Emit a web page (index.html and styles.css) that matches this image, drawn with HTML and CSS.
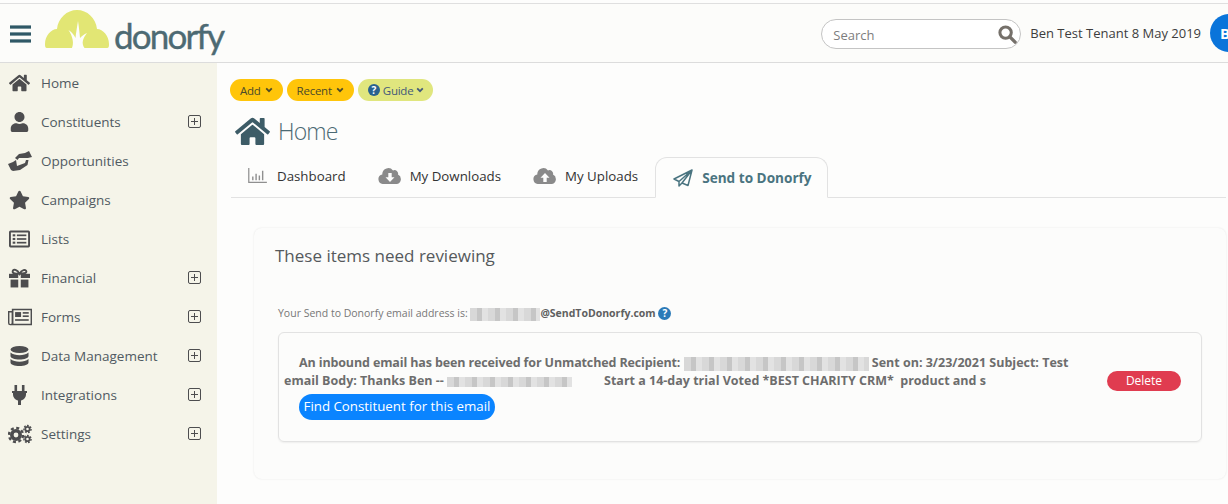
FILE: index.html
```html
<!DOCTYPE html>
<html lang="en">
<head>
    <meta charset="UTF-8">
    <title>Donorfy - Home</title>
    <link rel="stylesheet" href="styles.css">
</head>
<body>
    <header class="topbar">
        <svg class="burger" viewBox="0 0 22 18"><rect y="0" width="22" height="3.4"/><rect y="7.3" width="22" height="3.4"/><rect y="14.6" width="22" height="3.4"/></svg>
        <div class="logo">
            <svg class="logo-cloud" viewBox="0 0 64 38">
                <path fill="#e2e674" d="M2 38C0 38 0 36 0 34 0 26 6 19 12 19 13 8 22 0 32 0S51 8 52 19C58 19 64 26 64 34 64 36 64 38 62 38z"/>
                <path fill="#fdfdfb" d="M27 38C29 33 28 27 23.500 20 27 22 29 25 30.500 28 31 23 32 17 33 11 34 17 34.500 23 35 28 37 26 39 24 42 23 38 28 36 33 39.500 38z"/>
            </svg>
            <span class="logo-text">donorfy</span>
        </div>
        <div class="search">
            <span class="search-label">Search</span>
            <svg class="search-icon" viewBox="0 0 20 20"><circle cx="8" cy="8" r="6" fill="none" stroke="#75706a" stroke-width="3.200"/><path d="M12.500 12.500L18 18" stroke="#75706a" stroke-width="3.600" stroke-linecap="round"/></svg>
        </div>
        <span class="tenant">Ben Test Tenant 8 May 2019</span>
        <div class="avatar">BT</div>
    </header>

    <div class="layout">
        <nav class="sidebar">
            <a class="nav-item">
                <svg class="nav-icon" viewBox="0 0 576 512"><path d="M280.37 148.26L96 300.11V464a16 16 0 0 0 16 16l112.06-.29a16 16 0 0 0 15.92-16V368a16 16 0 0 1 16-16h64a16 16 0 0 1 16 16v95.64a16 16 0 0 0 16 16.05L464 480a16 16 0 0 0 16-16V300L295.67 148.26a12.19 12.19 0 0 0-15.3 0zM571.6 251.47L488 182.56V44.05a12 12 0 0 0-12-12h-56a12 12 0 0 0-12 12v72.61L318.47 43a48 48 0 0 0-61 0L4.34 251.47a12 12 0 0 0-1.6 16.9l25.5 31A12 12 0 0 0 45.15 301l235.22-193.74a12.19 12.19 0 0 1 15.3 0L530.9 301a12 12 0 0 0 16.9-1.6l25.5-31a12 12 0 0 0-1.7-16.93z"/></svg>
                <span class="nav-label">Home</span>
            </a>
            <a class="nav-item">
                <svg class="nav-icon" viewBox="0 0 448 512"><path d="M224 256c70.7 0 128-57.3 128-128S294.700 0 224 0 96 57.300 96 128s57.300 128 128 128zm89.600 32h-16.700c-22.200 10.200-46.900 16-72.900 16s-50.600-5.800-72.900-16h-16.700C60.200 288 0 348.200 0 422.400V464c0 26.500 21.500 48 48 48h352c26.500 0 48-21.500 48-48v-41.600c0-74.200-60.200-134.400-134.400-134.400z"/></svg>
                <span class="nav-label">Constituents</span>
                <span class="plus"></span>
            </a>
            <a class="nav-item">
                <svg class="nav-icon wide" viewBox="0 0 24 20"><path d="M0 13L5 11 8 9 9 15 17 12 18 9 20.500 9 19.500 14 12 19 5 20 3 19z"/><path d="M7 7L11 3 17 2 21 0 24 6 20 7H11L9.500 9z"/></svg>
                <span class="nav-label">Opportunities</span>
            </a>
            <a class="nav-item">
                <svg class="nav-icon" viewBox="0 0 576 512"><path d="M259.300 17.800L194 150.200 47.900 171.500c-26.200 3.800-36.700 36.100-17.700 54.600l105.700 103-25 145.500c-4.500 26.300 23.200 46 46.400 33.700L288 439.600l130.700 68.700c23.200 12.200 50.900-7.400 46.400-33.700l-25-145.500 105.700-103c19-18.500 8.500-50.800-17.700-54.600L382 150.200 316.700 17.800c-11.700-23.600-45.600-23.900-57.400 0z"/></svg>
                <span class="nav-label">Campaigns</span>
            </a>
            <a class="nav-item">
                <svg class="nav-icon" viewBox="0 0 20 16"><path fill-rule="evenodd" d="M1.500 0h17A1.500 1.500 0 0 1 20 1.500v13a1.500 1.500 0 0 1-1.500 1.500h-17A1.500 1.500 0 0 1 0 14.500v-13A1.500 1.500 0 0 1 1.500 0zm.3 1.800v12.400h16.400V1.800z"/><rect x="3.500" y="3.500" width="2.500" height="2"/><rect x="3.500" y="7" width="2.500" height="2"/><rect x="3.500" y="10.500" width="2.500" height="2"/><rect x="7.500" y="3.700" width="9" height="1.600"/><rect x="7.500" y="7.200" width="9" height="1.600"/><rect x="7.500" y="10.700" width="9" height="1.600"/></svg>
                <span class="nav-label">Lists</span>
            </a>
            <a class="nav-item">
                <svg class="nav-icon" viewBox="0 0 20 18"><rect x="0" y="5" width="8.800" height="4"/><rect x="11.200" y="5" width="8.800" height="4"/><rect x="1.500" y="10.500" width="7.300" height="7.500"/><rect x="11.200" y="10.500" width="7.300" height="7.500"/><path fill="none" stroke="#4d4d4f" stroke-width="1.800" d="M10 5C8 1 4 0 3.500 2.500S7 5 10 5c3 0 7-.5 6.500-2.500S12 1 10 5z"/></svg>
                <span class="nav-label">Financial</span>
                <span class="plus"></span>
            </a>
            <a class="nav-item">
                <svg class="nav-icon wide" viewBox="0 0 22 15"><path fill-rule="evenodd" d="M3.500 0H22v15H2a2 2 0 0 1-2-2V2h3.500zm1.500 1.300V13.700h15.700V1.300zM1.300 3.300v9.700a.8.8 0 0 0 2 0V3.300z"/><rect x="6.500" y="3" width="5.500" height="4.500"/><rect x="13.500" y="3" width="5.500" height="1.500"/><rect x="13.500" y="6" width="5.500" height="1.500"/><rect x="6.500" y="9.500" width="12.500" height="1.500"/></svg>
                <span class="nav-label">Forms</span>
                <span class="plus"></span>
            </a>
            <a class="nav-item">
                <svg class="nav-icon" viewBox="0 0 18 20"><ellipse cx="9" cy="3.500" rx="9" ry="3.500"/><path d="M0 6.500C2 8.500 5.500 9.200 9 9.200s7-.7 9-2.700V10c0 2-4 3.500-9 3.500S0 12 0 10z"/><path d="M0 13C2 15 5.500 15.700 9 15.700s7-.7 9-2.700v3.500c0 2-4 3.500-9 3.500s-9-1.500-9-3.500z"/></svg>
                <span class="nav-label">Data Management</span>
                <span class="plus"></span>
            </a>
            <a class="nav-item">
                <svg class="nav-icon" viewBox="0 0 16 20"><rect x="3" y="0" width="2.600" height="6"/><rect x="10.400" y="0" width="2.600" height="6"/><path d="M.500 6h15v2h-1v1.500c0 3-2.500 5.500-5 6V20h-3v-4.500c-2.500-.5-5-3-5-6V8h-1z"/></svg>
                <span class="nav-label">Integrations</span>
                <span class="plus"></span>
            </a>
            <a class="nav-item">
                <svg class="nav-icon wide" viewBox="0 0 24 18">
                    <circle cx="8" cy="10" r="4.200" fill="none" stroke="#4d4d4f" stroke-width="3.600"/>
                    <circle cx="8" cy="10" r="7" fill="none" stroke="#4d4d4f" stroke-width="2.500" stroke-dasharray="3 2.500"/>
                    <circle cx="19.500" cy="4" r="2.200" fill="none" stroke="#4d4d4f" stroke-width="1.800"/>
                    <circle cx="19.500" cy="4" r="3.600" fill="none" stroke="#4d4d4f" stroke-width="1.400" stroke-dasharray="1.800 1.400"/>
                    <circle cx="19.500" cy="14" r="2.200" fill="none" stroke="#4d4d4f" stroke-width="1.800"/>
                    <circle cx="19.500" cy="14" r="3.600" fill="none" stroke="#4d4d4f" stroke-width="1.400" stroke-dasharray="1.800 1.400"/>
                </svg>
                <span class="nav-label">Settings</span>
                <span class="plus"></span>
            </a>
        </nav>

        <main class="content">
            <div class="quick-actions">
                <span class="pill pill-yellow">Add <svg class="chevron" viewBox="0 0 10 7"><path d="M1.500 1.500L5 5l3.500-3.500"/></svg></span>
                <span class="pill pill-yellow">Recent <svg class="chevron" viewBox="0 0 10 7"><path d="M1.500 1.500L5 5l3.500-3.500"/></svg></span>
                <span class="pill pill-green"><span class="help-dot small">?</span> Guide <svg class="chevron" viewBox="0 0 10 7"><path d="M1.500 1.500L5 5l3.500-3.500"/></svg></span>
            </div>

            <div class="page-title">
                <svg class="title-icon" viewBox="0 0 576 512"><path d="M280.37 148.26L96 300.11V464a16 16 0 0 0 16 16l112.06-.29a16 16 0 0 0 15.92-16V368a16 16 0 0 1 16-16h64a16 16 0 0 1 16 16v95.64a16 16 0 0 0 16 16.05L464 480a16 16 0 0 0 16-16V300L295.67 148.26a12.19 12.19 0 0 0-15.3 0zM571.6 251.47L488 182.56V44.05a12 12 0 0 0-12-12h-56a12 12 0 0 0-12 12v72.61L318.47 43a48 48 0 0 0-61 0L4.34 251.47a12 12 0 0 0-1.6 16.9l25.5 31A12 12 0 0 0 45.15 301l235.22-193.74a12.19 12.19 0 0 1 15.3 0L530.9 301a12 12 0 0 0 16.9-1.6l25.5-31a12 12 0 0 0-1.7-16.93z"/></svg>
                <h1>Home</h1>
            </div>

            <div class="tabs">
                <a class="tab tab-dash">
                    <svg class="tab-icon chart" viewBox="0 0 20 16"><path d="M.700 0v15.300H20" fill="none" stroke="#8f8f8f" stroke-width="1.300"/><path d="M5 13V9M8.500 13V6M12 13V8M15.500 13V3" fill="none" stroke="#8f8f8f" stroke-width="1.500"/></svg>
                    Dashboard
                </a>
                <a class="tab">
                    <svg class="tab-icon cloud" viewBox="0 0 24 17"><path fill="#8a8a8a" d="M20 7.600A3.600 3.600 0 0 0 15 3.400 6 6 0 0 0 4.300 6.800v.7A4.800 4.800 0 0 0 5.500 17H19a5 5 0 0 0 1-9.400z"/><path fill="#fdfdfc" d="M10.300 6h3.400v4.300h2.800L12 15l-4.500-4.700h2.800z"/></svg>
                    My Downloads
                </a>
                <a class="tab">
                    <svg class="tab-icon cloud" viewBox="0 0 24 17"><path fill="#8a8a8a" d="M20 7.600A3.600 3.600 0 0 0 15 3.400 6 6 0 0 0 4.300 6.800v.7A4.800 4.800 0 0 0 5.500 17H19a5 5 0 0 0 1-9.400z"/><path fill="#fdfdfc" d="M10.300 15h3.400v-4.300h2.800L12 6l-4.500 4.700h2.800z"/></svg>
                    My Uploads
                </a>
                <a class="tab tab-active">
                    <svg class="tab-icon plane" viewBox="0 0 20 18"><path d="M19 1L1 10l5 2.500L19 1 9 14l6 2.500zM6 12.500V17l3-3" fill="none" stroke="#4a7480" stroke-width="1.500" stroke-linejoin="round"/></svg>
                    Send to Donorfy
                </a>
            </div>

            <section class="card">
                <h2>These items need reviewing</h2>
                <p class="address">Your Send to Donorfy email address is: <span class="redact redact-address"></span><strong>@SendToDonorfy.com</strong> <span class="help-dot">?</span></p>
                <div class="inbox-row">
                    <div class="inbox-body">
                        <p class="inbox-text"><span class="lead">An inbound email has been received for Unmatched Recipient:</span> <span class="redact redact-recipient"></span> Sent on: 3/23/2021 Subject: Test<br>
                        <span class="unindent">email Body: Thanks Ben -- <span class="redact redact-sender"></span><span class="spaced">Start a 14-day trial Voted *BEST CHARITY CRM*&nbsp; product and s</span></span></p>
                        <a class="btn-find">Find Constituent for this email</a>
                    </div>
                    <a class="btn-delete">Delete</a>
                </div>
            </section>
        </main>
    </div>
</body>
</html>
```

FILE: styles.css
```css
* {
    box-sizing: border-box;
}
html, body {
    height: 100%;
}
body {
    margin: 0;
    overflow: hidden;
    background: #fdfdfc;
    font-family: 'Open Sans', 'Liberation Sans', sans-serif;
    color: #333;
}
h1, h2, p {
    margin: 0;
    font-weight: normal;
}

/* top bar */
.topbar {
    display: flex;
    align-items: center;
    height: 60px;
    margin-top: 3px;
    padding-left: 10px;
    background: #fcfcfa;
    border-top: 1px solid #dfdfdf;
    border-bottom: 1px solid #dcdcdc;
    overflow: hidden;
}
.burger {
    width: 21px;
    height: 18px;
    margin-top: 1px;
    fill: #2f5866;
}
.logo {
    display: flex;
    align-items: flex-end;
    margin-left: 14px;
    margin-top: -9px;
}
.logo-cloud {
    width: 64px;
    height: 38px;
}
.logo-text {
    margin-left: 5px;
    margin-bottom: -8px;
    font-family: 'Lato', sans-serif;
    font-size: 35px;
    line-height: 42px;
    letter-spacing: -1.800px;
    color: #4d6a73;
    -webkit-text-stroke: .4px #4d6a73;
}
.search {
    display: flex;
    align-items: center;
    justify-content: space-between;
    width: 200px;
    height: 30px;
    margin-left: auto;
    margin-top: 2px;
    padding: 0 3px 0 11px;
    background: #fff;
    border: 1px solid #c4c4c4;
    border-radius: 15px;
}
.search-label {
    padding-top: 2px;
    font-size: 13px;
    color: #7d7d7d;
}
.search-icon {
    width: 19px;
    height: 19px;
}
.tenant {
    margin-left: 9px;
    font-size: 13px;
    white-space: nowrap;
    color: #3d3d3d;
}
.avatar {
    flex: none;
    width: 38px;
    height: 38px;
    margin-left: 9px;
    margin-right: -20px;
    margin-top: -1px;
    padding-left: 10px;
    line-height: 38px;
    font-size: 15px;
    font-weight: 700;
    color: #fff;
    background: #0a74da;
    border-radius: 50%;
}

.layout {
    display: flex;
    height: 441px;
}

/* sidebar */
.sidebar {
    flex: none;
    width: 217px;
    background: #f5f4e9;
}
.nav-item {
    display: flex;
    align-items: center;
    height: 39px;
    padding: 0 16px 0 0;
}
.nav-icon {
    flex: none;
    width: 21px;
    height: 20px;
    margin-left: 9px;
    margin-right: 11px;
    fill: #4d4d4f;
}
.nav-icon.wide {
    width: 24px;
    margin-left: 8px;
    margin-right: 9px;
}
.nav-label {
    flex: 1;
    font-size: 13.500px;
    color: #505a62;
}
.plus {
    position: relative;
    flex: none;
    width: 13px;
    height: 13px;
    border: 1px solid #4d4d4f;
    border-radius: 2px;
}
.plus::before, .plus::after {
    content: "";
    position: absolute;
    background: #4d4d4f;
}
.plus::before {
    left: 2px;
    right: 2px;
    top: 5px;
    height: 1px;
}
.plus::after {
    top: 2px;
    bottom: 2px;
    left: 5px;
    width: 1px;
}

/* main column */
.content {
    flex: 1;
    min-width: 0;
    padding: 16px 2px 0 13px;
}
.quick-actions {
    display: flex;
    gap: 4px;
}
.pill {
    display: flex;
    align-items: center;
    gap: 4px;
    height: 22px;
    padding: 0 10px;
    font-size: 11.500px;
    letter-spacing: -.25px;
    border-radius: 11px;
    color: #4a4a2a;
}
.pill-yellow {
    background: #ffc50a;
}
.pill-green {
    gap: 3px;
    padding: 0 9px 0 10px;
    background: #e0e67e;
    color: #43597a;
}
.chevron {
    width: 8px;
    height: 6px;
    fill: none;
    stroke: currentColor;
    stroke-width: 2.200;
}
.help-dot {
    display: inline-block;
    width: 13px;
    height: 13px;
    line-height: 13px;
    font-size: 10px;
    font-weight: 700;
    text-align: center;
    letter-spacing: 0;
    color: #fff;
    background: #2b7ab8;
    border-radius: 50%;
}
.help-dot.small {
    width: 12px;
    height: 12px;
    line-height: 12px;
    background: #29628f;
}
.page-title {
    display: flex;
    align-items: center;
    gap: 8px;
    height: 32px;
    margin-top: 14px;
    padding-left: 5px;
}
.title-icon {
    width: 35px;
    height: 31px;
    fill: #3d5c67;
}
h1 {
    font-size: 23px;
    font-weight: 300;
    letter-spacing: -.9px;
    color: #4c6a74;
}

/* tabs */
.tabs {
    display: flex;
    align-items: stretch;
    height: 41px;
    margin: 10px 0 0 1px;
    border-bottom: 1px solid #e2e2e2;
}
.tab {
    display: flex;
    align-items: center;
    gap: 8px;
    padding: 0 16px 3px;
    font-size: 13.300px;
    white-space: nowrap;
    color: #333;
}
.tab-dash {
    gap: 10px;
    padding: 0 16px 3px 17px;
}
.tab-icon.chart {
    width: 19px;
    height: 15px;
}
.tab-icon.cloud {
    width: 24px;
    height: 17px;
}
.tab-icon.plane {
    width: 20px;
    height: 18px;
}
.tab-active {
    gap: 9px;
    height: 41px;
    margin-left: 1px;
    padding: 0 15px 0 17px;
    font-size: 13.600px;
    font-weight: 700;
    color: #4a7480;
    background: #fdfdfc;
    border: 1px solid #e2e2e2;
    border-bottom: 1px solid #fdfdfc;
    border-radius: 12px 12px 0 0;
}

/* review card */
.card {
    height: 251px;
    margin: 30px 0 0 24px;
    padding: 15px 24px 0 21px;
    background: #fcfcfb;
    border-radius: 8px;
    box-shadow: 0 0 2px rgba(0, 0, 0, .1);
}
.card h2 {
    font-size: 17px;
    line-height: 26px;
    color: #55595c;
}
.address {
    margin-top: 35px;
    margin-left: 3px;
    font-size: 10.500px;
    line-height: 18px;
    color: #777;
}
.address strong {
    font-weight: 700;
    color: #5f5f5f;
}
.redact {
    display: inline-block;
    vertical-align: middle;
    background: repeating-linear-gradient(90deg, #d8d8d8 0 7px, #c6c6c6 7px 12px, #e2e2e2 12px 18px);
}
.redact-address {
    width: 70px;
    height: 13px;
}
.redact-recipient {
    width: 185px;
    height: 14px;
}
.redact-sender {
    width: 125px;
    height: 10px;
    margin-right: 32px;
}
.inbox-row {
    display: flex;
    align-items: center;
    height: 110px;
    margin: 10px 0 0 3px;
    padding: 0 20px 0 5px;
    border: 1px solid #e2e2e2;
    border-radius: 6px;
    box-shadow: 0 1px 2px rgba(0, 0, 0, .06);
}
.inbox-body {
    flex: 1;
    align-self: flex-start;
    padding-top: 21px;
    min-width: 0;
}
.inbox-text {
    padding-left: 15px;
    font-size: 12.500px;
    font-weight: 700;
    line-height: 18px;
    white-space: nowrap;
    color: #6d6d6d;
}
.lead {
    letter-spacing: -.13px;
}
.unindent {
    margin-left: -15px;
}
.btn-find {
    display: block;
    width: 196px;
    height: 26px;
    margin: 4px 0 0 15px;
    line-height: 25px;
    font-size: 13.300px;
    text-align: center;
    white-space: nowrap;
    color: #fff;
    background: #0a84ff;
    border-radius: 13px;
}
.btn-delete {
    flex: none;
    width: 74px;
    height: 20px;
    margin-bottom: 12px;
    line-height: 20px;
    font-size: 12px;
    text-align: center;
    color: #fff;
    background: #e03c50;
    border-radius: 10px;
}
```
